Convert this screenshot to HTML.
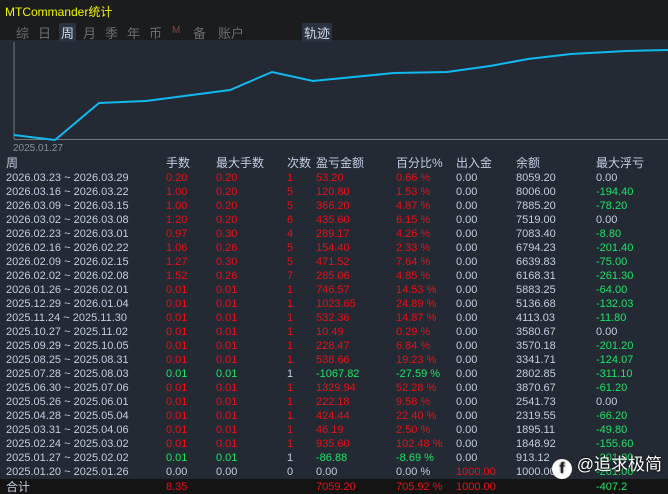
<!DOCTYPE html><html><head><meta charset="utf-8"><style>
body{margin:0;width:668px;height:494px;background:#232a33;overflow:hidden;font-family:"Liberation Sans","Noto Sans CJK SC",sans-serif;font-size:11px;color:#c3cde0;position:relative}
.top{position:absolute;left:0;top:0;width:668px;height:40px;background:#1b1c1e}
.title{position:absolute;left:5px;top:3px;color:#f5f500;font-size:12px}
.tabs span{position:absolute;top:23px;font-size:13px;color:#6a6e74}
.sel{background:#2a3340;color:#d0d8e6!important;padding:0 2px;border-radius:2px}
.r{position:absolute;left:0;width:668px;height:14px;line-height:14px;white-space:nowrap}
.r span{position:absolute}
.c0{left:6px}.c1{left:166px}.c2{left:216px}.c3{left:287px}.c4{left:316px}.c5{left:396px}.c6{left:456px}.c7{left:516px}.c8{left:596px}
.R{color:#e8101a}.G{color:#1ee36a}
</style></head><body>
<div class="top"><div class="title">MTCommander统计</div>
<div class="tabs"><span style="left:16px">综</span><span style="left:38px">日</span><span class="sel" style="left:59px">周</span><span style="left:83px">月</span><span style="left:105px">季</span><span style="left:127px">年</span><span style="left:149px">币</span><span style="left:172px;font-size:10px;top:25px;color:#884444">M</span><span style="left:193px">备</span><span style="left:218px">账户</span><span class="sel" style="left:302px">轨迹</span></div></div>
<svg style="position:absolute;left:0;top:40px" width="668" height="120">
<line x1="14" y1="2" x2="14" y2="99" stroke="#777"/><line x1="14" y1="99.5" x2="668" y2="99.5" stroke="#777"/>
<polyline fill="none" stroke="#12b8f0" stroke-width="2" points="14,95 30,97 55,100 99,63 146,61 230,50 272,32 313,41 394,33 447,32 490,26 528,19 571,14 626,11 668,10"/>
<text x="13" y="111" fill="#8a9098" font-size="10" font-family="Liberation Sans">2025.01.27</text></svg>
<div class="r" style="top:156px;font-size:12px"><span class="c0">周</span><span class="c1">手数</span><span class="c2">最大手数</span><span class="c3">次数</span><span class="c4">盈亏金额</span><span class="c5">百分比%</span><span class="c6">出入金</span><span class="c7">余额</span><span class="c8">最大浮亏</span></div>
<div class="r" style="top:171px"><span class="c0">2026.03.23 ~ 2026.03.29</span><span class="c1 R">0.20</span><span class="c2 R">0.20</span><span class="c3 R">1</span><span class="c4 R">53.20</span><span class="c5 R">0.66 %</span><span class="c6">0.00</span><span class="c7">8059.20</span><span class="c8">0.00</span></div>
<div class="r" style="top:185px"><span class="c0">2026.03.16 ~ 2026.03.22</span><span class="c1 R">1.00</span><span class="c2 R">0.20</span><span class="c3 R">5</span><span class="c4 R">120.80</span><span class="c5 R">1.53 %</span><span class="c6">0.00</span><span class="c7">8006.00</span><span class="c8 G">-194.40</span></div>
<div class="r" style="top:199px"><span class="c0">2026.03.09 ~ 2026.03.15</span><span class="c1 R">1.00</span><span class="c2 R">0.20</span><span class="c3 R">5</span><span class="c4 R">366.20</span><span class="c5 R">4.87 %</span><span class="c6">0.00</span><span class="c7">7885.20</span><span class="c8 G">-78.20</span></div>
<div class="r" style="top:213px"><span class="c0">2026.03.02 ~ 2026.03.08</span><span class="c1 R">1.20</span><span class="c2 R">0.20</span><span class="c3 R">6</span><span class="c4 R">435.60</span><span class="c5 R">6.15 %</span><span class="c6">0.00</span><span class="c7">7519.00</span><span class="c8">0.00</span></div>
<div class="r" style="top:227px"><span class="c0">2026.02.23 ~ 2026.03.01</span><span class="c1 R">0.97</span><span class="c2 R">0.30</span><span class="c3 R">4</span><span class="c4 R">289.17</span><span class="c5 R">4.26 %</span><span class="c6">0.00</span><span class="c7">7083.40</span><span class="c8 G">-8.80</span></div>
<div class="r" style="top:241px"><span class="c0">2026.02.16 ~ 2026.02.22</span><span class="c1 R">1.06</span><span class="c2 R">0.26</span><span class="c3 R">5</span><span class="c4 R">154.40</span><span class="c5 R">2.33 %</span><span class="c6">0.00</span><span class="c7">6794.23</span><span class="c8 G">-201.40</span></div>
<div class="r" style="top:255px"><span class="c0">2026.02.09 ~ 2026.02.15</span><span class="c1 R">1.27</span><span class="c2 R">0.30</span><span class="c3 R">5</span><span class="c4 R">471.52</span><span class="c5 R">7.64 %</span><span class="c6">0.00</span><span class="c7">6639.83</span><span class="c8 G">-75.00</span></div>
<div class="r" style="top:269px"><span class="c0">2026.02.02 ~ 2026.02.08</span><span class="c1 R">1.52</span><span class="c2 R">0.26</span><span class="c3 R">7</span><span class="c4 R">285.06</span><span class="c5 R">4.85 %</span><span class="c6">0.00</span><span class="c7">6168.31</span><span class="c8 G">-261.30</span></div>
<div class="r" style="top:283px"><span class="c0">2026.01.26 ~ 2026.02.01</span><span class="c1 R">0.01</span><span class="c2 R">0.01</span><span class="c3 R">1</span><span class="c4 R">746.57</span><span class="c5 R">14.53 %</span><span class="c6">0.00</span><span class="c7">5883.25</span><span class="c8 G">-64.00</span></div>
<div class="r" style="top:297px"><span class="c0">2025.12.29 ~ 2026.01.04</span><span class="c1 R">0.01</span><span class="c2 R">0.01</span><span class="c3 R">1</span><span class="c4 R">1023.65</span><span class="c5 R">24.89 %</span><span class="c6">0.00</span><span class="c7">5136.68</span><span class="c8 G">-132.03</span></div>
<div class="r" style="top:311px"><span class="c0">2025.11.24 ~ 2025.11.30</span><span class="c1 R">0.01</span><span class="c2 R">0.01</span><span class="c3 R">1</span><span class="c4 R">532.36</span><span class="c5 R">14.87 %</span><span class="c6">0.00</span><span class="c7">4113.03</span><span class="c8 G">-11.80</span></div>
<div class="r" style="top:325px"><span class="c0">2025.10.27 ~ 2025.11.02</span><span class="c1 R">0.01</span><span class="c2 R">0.01</span><span class="c3 R">1</span><span class="c4 R">10.49</span><span class="c5 R">0.29 %</span><span class="c6">0.00</span><span class="c7">3580.67</span><span class="c8">0.00</span></div>
<div class="r" style="top:339px"><span class="c0">2025.09.29 ~ 2025.10.05</span><span class="c1 R">0.01</span><span class="c2 R">0.01</span><span class="c3 R">1</span><span class="c4 R">228.47</span><span class="c5 R">6.84 %</span><span class="c6">0.00</span><span class="c7">3570.18</span><span class="c8 G">-201.20</span></div>
<div class="r" style="top:353px"><span class="c0">2025.08.25 ~ 2025.08.31</span><span class="c1 R">0.01</span><span class="c2 R">0.01</span><span class="c3 R">1</span><span class="c4 R">538.66</span><span class="c5 R">19.23 %</span><span class="c6">0.00</span><span class="c7">3341.71</span><span class="c8 G">-124.07</span></div>
<div class="r" style="top:367px"><span class="c0">2025.07.28 ~ 2025.08.03</span><span class="c1 G">0.01</span><span class="c2 G">0.01</span><span class="c3">1</span><span class="c4 G">-1067.82</span><span class="c5 G">-27.59 %</span><span class="c6">0.00</span><span class="c7">2802.85</span><span class="c8 G">-311.10</span></div>
<div class="r" style="top:381px"><span class="c0">2025.06.30 ~ 2025.07.06</span><span class="c1 R">0.01</span><span class="c2 R">0.01</span><span class="c3 R">1</span><span class="c4 R">1329.94</span><span class="c5 R">52.28 %</span><span class="c6">0.00</span><span class="c7">3870.67</span><span class="c8 G">-61.20</span></div>
<div class="r" style="top:395px"><span class="c0">2025.05.26 ~ 2025.06.01</span><span class="c1 R">0.01</span><span class="c2 R">0.01</span><span class="c3 R">1</span><span class="c4 R">222.18</span><span class="c5 R">9.58 %</span><span class="c6">0.00</span><span class="c7">2541.73</span><span class="c8">0.00</span></div>
<div class="r" style="top:409px"><span class="c0">2025.04.28 ~ 2025.05.04</span><span class="c1 R">0.01</span><span class="c2 R">0.01</span><span class="c3 R">1</span><span class="c4 R">424.44</span><span class="c5 R">22.40 %</span><span class="c6">0.00</span><span class="c7">2319.55</span><span class="c8 G">-66.20</span></div>
<div class="r" style="top:423px"><span class="c0">2025.03.31 ~ 2025.04.06</span><span class="c1 R">0.01</span><span class="c2 R">0.01</span><span class="c3 R">1</span><span class="c4 R">46.19</span><span class="c5 R">2.50 %</span><span class="c6">0.00</span><span class="c7">1895.11</span><span class="c8 G">-49.80</span></div>
<div class="r" style="top:437px"><span class="c0">2025.02.24 ~ 2025.03.02</span><span class="c1 R">0.01</span><span class="c2 R">0.01</span><span class="c3 R">1</span><span class="c4 R">935.60</span><span class="c5 R">102.48 %</span><span class="c6">0.00</span><span class="c7">1848.92</span><span class="c8 G">-155.60</span></div>
<div class="r" style="top:451px"><span class="c0">2025.01.27 ~ 2025.02.02</span><span class="c1 G">0.01</span><span class="c2 G">0.01</span><span class="c3">1</span><span class="c4 G">-86.88</span><span class="c5 G">-8.69 %</span><span class="c6">0.00</span><span class="c7">913.12</span><span class="c8 G">-201.00</span></div>
<div class="r" style="top:465px"><span class="c0">2025.01.20 ~ 2025.01.26</span><span class="c1">0.00</span><span class="c2">0.00</span><span class="c3">0</span><span class="c4">0.00</span><span class="c5">0.00 %</span><span class="c6 R">1000.00</span><span class="c7">1000.00</span><span class="c8 G">-201.00</span></div>
<div style="position:absolute;left:0;top:479px;width:668px;height:15px;background:#141415"></div>
<div class="r" style="top:480px"><span class="c0" style="font-size:12px">合计</span><span class="c1 R">8.35</span><span class="c4 R">7059.20</span><span class="c5 R">705.92 %</span><span class="c6 R">1000.00</span><span class="c8 G">-407.2</span></div>
<div style="position:absolute;left:552px;top:450px;font-size:17px;color:#fff;white-space:nowrap;text-shadow:0 0 2px #000"><span style="display:inline-block;width:20px;height:20px;border-radius:50%;background:#fff;color:#222;font-weight:bold;text-align:center;line-height:20px;font-size:15px;vertical-align:-3px">f</span> @追求极简</div>
</body></html>
